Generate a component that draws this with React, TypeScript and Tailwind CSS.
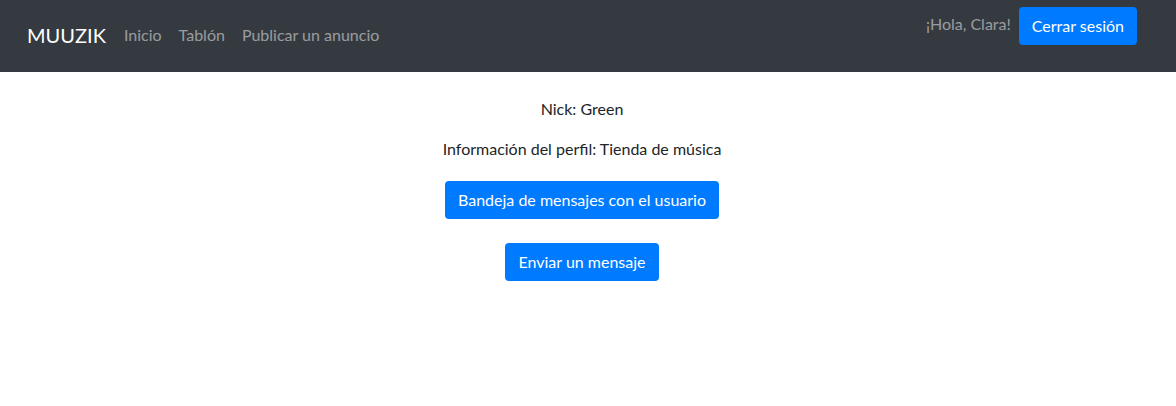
import React from "react";

export default function App() {
  return (
    <div className="min-h-[406px] bg-white text-[#212529] font-['Lato',sans-serif]">
      {/* Navbar */}
      <nav className="h-[72px] bg-[#343a40] flex items-start justify-between pl-[27px] pr-[39px]">
        <div className="flex items-center h-[72px] pb-[2px]">
          <span className="text-[20px] leading-[30px] text-white mr-[18px]">MUUZIK</span>
          <ul className="flex items-center gap-[17px] text-[16px] leading-6 text-white/50">
            <li>Inicio</li>
            <li>Tablón</li>
            <li>Publicar un anuncio</li>
          </ul>
        </div>
        <div className="flex items-start pt-[7px]">
          <span className="text-[16px] leading-6 text-white/50 mr-[8px] mt-[5px]">¡Hola, Clara!</span>
          <button className="h-[38px] px-[13px] rounded-[4px] bg-[#007bff] text-white text-[16px] leading-6">
            Cerrar sesión
          </button>
        </div>
      </nav>

      {/* Profile */}
      <main className="flex flex-col items-center pt-[25px] pr-[12px] text-[16px] leading-6">
        <p className="mb-4">Nick: Green</p>
        <p className="mb-[20px]">Información del perfil: Tienda de música</p>
        <button className="h-[38px] px-[13px] rounded-[4px] bg-[#007bff] text-white">
          Bandeja de mensajes con el usuario
        </button>
        <button className="mt-[24px] h-[38px] px-[13px] rounded-[4px] bg-[#007bff] text-white">
          Enviar un mensaje
        </button>
      </main>
    </div>
  );
}
